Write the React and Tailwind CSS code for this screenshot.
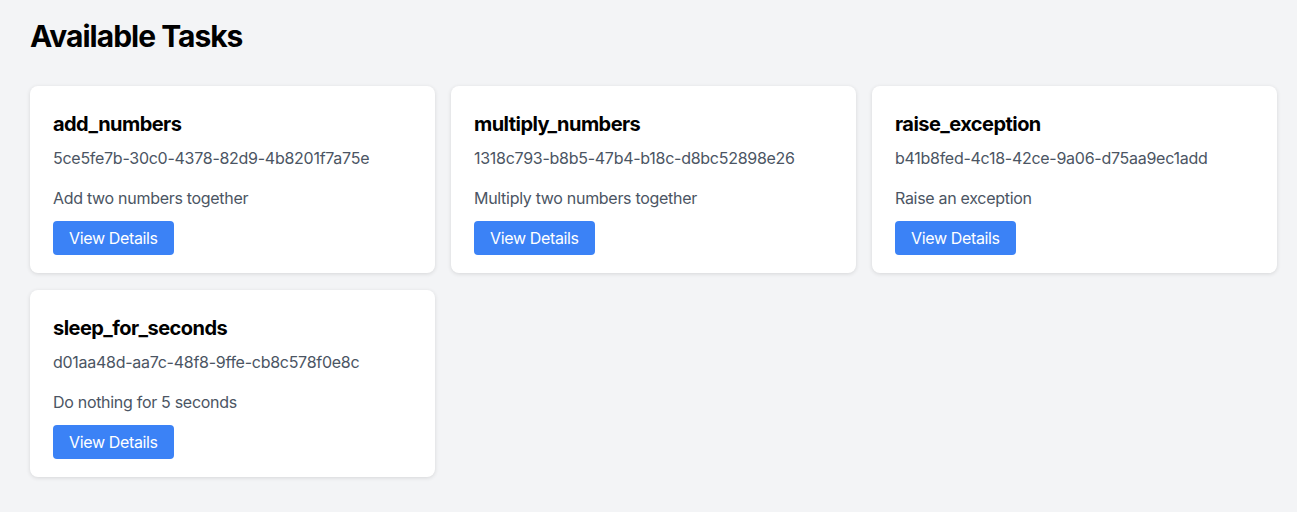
import React from "react";

const tasks = [
  {
    name: "add_numbers",
    id: "5ce5fe7b-30c0-4378-82d9-4b8201f7a75e",
    description: "Add two numbers together",
  },
  {
    name: "multiply_numbers",
    id: "1318c793-b8b5-47b4-b18c-d8bc52898e26",
    description: "Multiply two numbers together",
  },
  {
    name: "raise_exception",
    id: "b41b8fed-4c18-42ce-9a06-d75aa9ec1add",
    description: "Raise an exception",
  },
  {
    name: "sleep_for_seconds",
    id: "d01aa48d-aa7c-48f8-9ffe-cb8c578f0e8c",
    description: "Do nothing for 5 seconds",
  },
];

const TaskCard = ({ task }) => {
  return (
    <div className="bg-white rounded-lg shadow-[0_1px_4px_rgba(0,0,0,0.12)] pl-[23px] pr-6 pt-6 pb-[18px]">
      <h2 className="text-xl leading-7 font-bold text-black tracking-[-0.55px]">{task.name}</h2>
      <p className="mt-2 text-base leading-6 text-[#4b5563] tracking-[-0.27px]">{task.id}</p>
      <p className="mt-4 text-base leading-6 text-[#4b5563] tracking-[-0.3px]">{task.description}</p>
      <button className="mt-[11px] bg-[#3b82f6] text-white text-base leading-6 px-4 py-[5px] rounded tracking-[-0.35px]">
        View Details
      </button>
    </div>
  );
};

const App = () => {
  return (
    <div className="min-h-screen bg-[#f3f4f6] pl-[30px] pr-[20px] pt-[18px] font-['Inter',sans-serif]">
      <h1 className="text-[30px] leading-9 font-bold text-black tracking-[-1px]">Available Tasks</h1>
      <div className="mt-[32px] grid grid-cols-3 gap-x-4 gap-y-[17px]">
        {tasks.map((task, index) => (
          <TaskCard task={task} key={index} />
        ))}
      </div>
    </div>
  );
};

export default App;
